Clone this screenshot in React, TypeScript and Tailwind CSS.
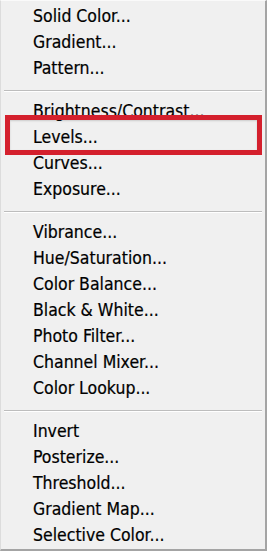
const groups: string[][] = [
  ['Solid Color...', 'Gradient...', 'Pattern...'],
  ['Brightness/Contrast...', 'Levels...', 'Curves...', 'Exposure...'],
  [
    'Vibrance...',
    'Hue/Saturation...',
    'Color Balance...',
    'Black & White...',
    'Photo Filter...',
    'Channel Mixer...',
    'Color Lookup...',
  ],
  ['Invert', 'Posterize...', 'Threshold...', 'Gradient Map...', 'Selective Color...'],
];

function Separator() {
  return (
    <div className="h-[17px] flex items-center px-[3px]">
      <div className="w-full border-t border-b border-t-[#bdbdbd] border-b-white" />
    </div>
  );
}

function MenuItem({ label }: { label: string }) {
  const selected = label === 'Levels...';
  return (
    <div className="relative h-[26px] flex items-center pl-[32px]">
      <span className="leading-none">{label}</span>
      {/* red highlight box */}
      {selected && (
        <div className="absolute left-[4px] right-[3px] top-[-10px] bottom-[-4px] border-[5px] border-[#d4202d] shadow-[inset_0_1px_2px_rgba(0,0,0,0.15)]" />
      )}
    </div>
  );
}

export default function App() {
  return (
    <div className="w-[267px] h-[551px] bg-white">
      <div
        className="
          w-full h-full bg-[#f0f0f0]
          border-l border-t border-l-[#dcdcdc] border-t-[#fafafa]
          border-r-2 border-b-2 border-r-[#a4a4a4] border-b-[#a4a4a4]
          pt-[3px]
          font-['DejaVu_Sans_Condensed','DejaVu_Sans',sans-serif] font-stretch-condensed
          text-[17.5px] text-black [-webkit-text-stroke:0.2px_black]
        "
      >
        {groups.map((group, i) => (
          <div key={i}>
            {i > 0 && <Separator />}
            {group.map((label) => (
              <MenuItem key={label} label={label} />
            ))}
          </div>
        ))}
      </div>
    </div>
  );
}
